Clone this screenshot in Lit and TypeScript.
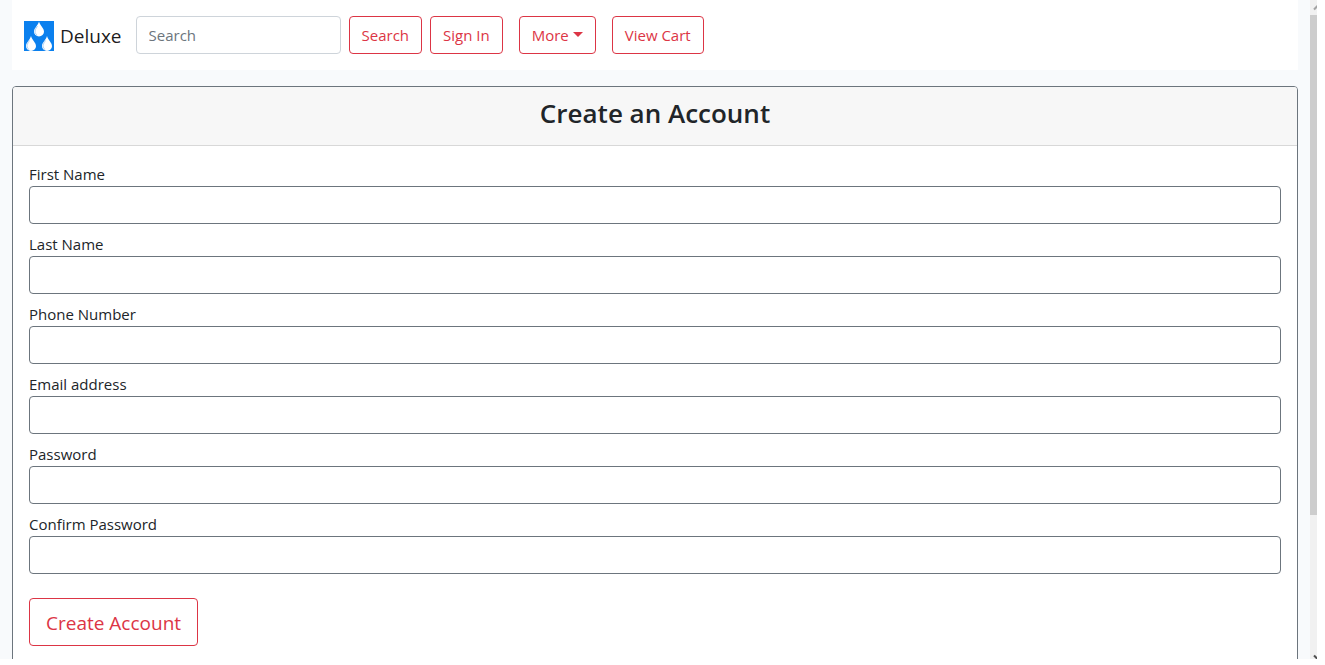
import { LitElement, html, css } from "lit";
import { customElement } from "lit/decorators.js";

const FIELDS = [
  { id: "first-name", label: "First Name", type: "text" },
  { id: "last-name", label: "Last Name", type: "text" },
  { id: "phone", label: "Phone Number", type: "tel" },
  { id: "email", label: "Email address", type: "email" },
  { id: "password", label: "Password", type: "password" },
  { id: "confirm", label: "Confirm Password", type: "password" },
];

@customElement("app-root")
export class AppRoot extends LitElement {
  static styles = css`
    :host {
      display: block;
      box-sizing: border-box;
      height: 100vh;
      padding: 0 8px 6px 0;
      overflow: hidden;
      background: #fff;
      color: #212529;
      font: 400 15px/24px "Open Sans", "Noto Sans", sans-serif;
    }
    *,
    *::before,
    *::after {
      box-sizing: border-box;
    }
    .viewport {
      display: flex;
      height: 100%;
      overflow: hidden;
      background: #f8fafc;
    }
    .page {
      flex: 1;
      min-width: 0;
      padding: 0 12px;
    }
    .navbar {
      display: flex;
      align-items: center;
      padding: 16px 12px;
      margin-bottom: 16px;
      background: #fff;
    }
    .brand {
      display: flex;
      align-items: center;
      gap: 6px;
      padding-top: 2px;
      margin-right: 14px;
      color: rgba(0, 0, 0, 0.9);
      font-size: 19px;
      text-decoration: none;
    }
    .logo {
      display: block;
      width: 30px;
      height: 30px;
    }
    .search,
    .links {
      display: flex;
      gap: 8px;
      margin-right: 8px;
    }
    .links {
      gap: 16px;
    }
    .control {
      display: block;
      width: 100%;
      height: 38px;
      padding: 6px 12px;
      border: 1px solid #6c757d;
      border-radius: 4px;
      background: #fff;
      color: #212529;
      font: inherit;
    }
    .query {
      width: 205px;
      border-color: #ced4da;
    }
    .query::placeholder {
      color: #6c757d;
      opacity: 1;
    }
    .btn {
      display: inline-flex;
      align-items: center;
      height: 38px;
      padding: 6px 12px;
      border: 1px solid #dc3545;
      border-radius: 4px;
      background: #fff;
      color: #dc3545;
      font: inherit;
      white-space: nowrap;
      text-decoration: none;
      cursor: pointer;
    }
    .caret::after {
      content: "";
      margin-left: 4px;
      margin-bottom: 2px;
      border: 5px solid transparent;
      border-top-color: currentColor;
      border-bottom: 0;
    }
    .card {
      border: 1px solid #6c757d;
      border-radius: 4px;
      background: #fff;
    }
    .card-header {
      padding: 8px 16px 14px;
      border-bottom: 1px solid #d8d8d8;
      border-radius: 3px 3px 0 0;
      background: #f7f7f7;
      text-align: center;
    }
    .title {
      margin: 0;
      font-size: 26px;
      font-weight: 600;
      line-height: 36px;
    }
    .form {
      display: grid;
      gap: 8px;
      padding: 16px;
    }
    .label {
      display: block;
    }
    .submit {
      justify-self: start;
      height: 48px;
      margin-top: 16px;
      padding: 10px 16px 8px;
      font-size: 19px;
    }
    .scrollbar {
      flex: none;
      width: 7px;
      display: flex;
      flex-direction: column;
      background: #f1f1f1;
    }
    .arrow {
      display: block;
      width: 7px;
      height: 15px;
    }
    .thumb {
      flex: 31;
      background: #cdcdcd;
    }
    .track {
      flex: 8;
    }
  `;

  render() {
    return html`
      <div class="viewport">
        <div class="page">
          <nav class="navbar">
            <a class="brand" href="#">
              <svg class="logo" viewBox="0 0 30 30" aria-hidden="true">
                <defs>
                  <g id="drop">
                    <path fill="#fff" d="M0 0C1 4 5 6.500 5 10.200A5 4.800 0 0 1-5 10.200C-5 6.500-1 4 0 0Z" />
                    <path fill="none" stroke="#a9cdf3" stroke-width="0.900" d="M-1.500 4.500C-3.500 7.500-4.200 9-3.800 11Q-3.300 12.800-1.800 13.800" />
                  </g>
                </defs>
                <rect width="30" height="30" fill="#0b80ee" />
                <use href="#drop" x="15" y="0.500" />
                <use href="#drop" x="7" y="15" />
                <use href="#drop" x="23" y="15" />
              </svg>
              Deluxe
            </a>
            <form class="search" @submit=${(e: Event) => e.preventDefault()}>
              <input class="control query" type="search" placeholder="Search" aria-label="Search" />
              <button class="btn" type="submit">Search</button>
            </form>
            <div class="links">
              <a class="btn" href="#">Sign In</a>
              <button class="btn caret" type="button" aria-haspopup="true">More</button>
              <a class="btn" href="#">View Cart</a>
            </div>
          </nav>
          <main class="card">
            <header class="card-header"><h3 class="title">Create an Account</h3></header>
            <form class="form" @submit=${(e: Event) => e.preventDefault()}>
              ${FIELDS.map(
                (f) => html`<div>
                  <label class="label" for=${f.id}>${f.label}</label>
                  <input class="control" id=${f.id} type=${f.type} />
                </div>`
              )}
              <button class="btn submit" type="submit">Create Account</button>
            </form>
          </main>
        </div>
        <div class="scrollbar" aria-hidden="true">
          <svg class="arrow" viewBox="0 0 7 15">
            <path d="M4 9.500L8 5.500" stroke="#a3a3a3" stroke-width="2" fill="none" />
          </svg>
          <div class="thumb"></div>
          <div class="track"></div>
          <svg class="arrow" viewBox="0 0 7 15">
            <path d="M4 11.500L8 15.500" stroke="#505050" stroke-width="2" fill="none" />
          </svg>
        </div>
      </div>
    `;
  }
}
